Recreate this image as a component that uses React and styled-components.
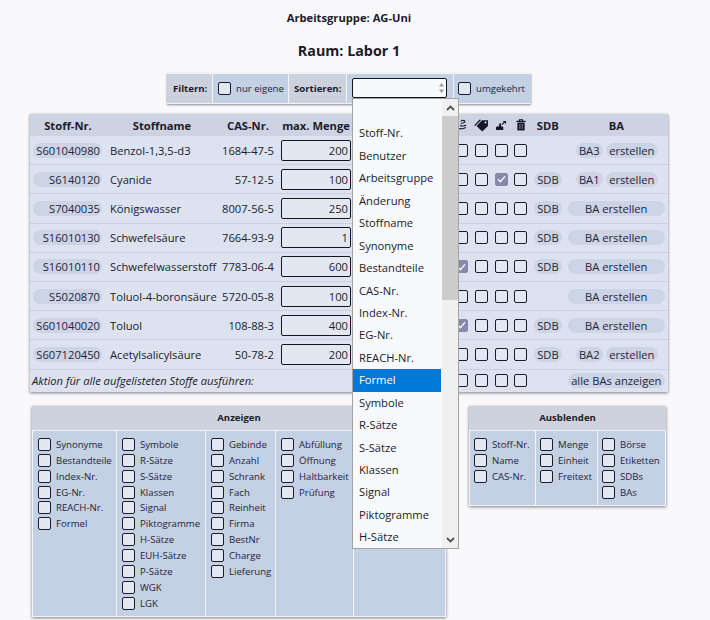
import React from 'react';
import styled, { createGlobalStyle } from 'styled-components';

const Global = createGlobalStyle`
  html, body { margin: 0; padding: 0; background: #f9f9fc; }
  body { font-family: "Open Sans", "Noto Sans", sans-serif; font-size: 11.2px; color: #1b1b2b; height: 620px; overflow: hidden; }
`;
const Page = styled.div`
  width: 698px;
  padding-top: 10px;
  display: flex;
  flex-direction: column;
`;
const Group = styled.div`
  font-weight: 700; font-size: 11.2px; line-height: 16px; text-align: center;
`;
const Room = styled.h1`
  margin: 15px 0 0; font-weight: 700; font-size: 14.3px; line-height: 20px; text-align: center;
`;
const Bar = styled.div`
  align-self: flex-start;
  margin: 12px 0 0 167px;
  display: flex; gap: 1px; height: 29px; padding: 1px 0;
  background: #f2f3f8;
  box-shadow: 0 1px 2px rgba(0,0,0,.45);
`;
const BarCell = styled.div`
  position: relative;
  display: flex; align-items: center; gap: 5px;
  width: ${p => p.$w}px; padding-left: ${p => p.$pl}px; box-sizing: border-box;
  font-size: 9.6px;
  font-weight: ${p => p.$label ? 700 : 400};
  background: ${p => p.$label ? '#ccd1de' : '#c4d0e3'};
`;
const Select = styled.div`
  width: 95px; height: 20px; box-sizing: border-box; margin-top: -1px;
  border: 1px solid #15151f; border-radius: 2px; background: #f8f9fd;
  display: flex; align-items: center; justify-content: flex-end; padding-right: 1px;
`;
const Drop = styled.div`
  position: absolute; z-index: 5; left: 5px; top: 24px;
  width: 107px; height: 451px; box-sizing: border-box;
  border: 1px solid #a3a3a3; background: #f8f9fd;
  display: flex;
`;
const DropList = styled.div`
  width: 88px; flex: none; margin-right: 1px; overflow: hidden; padding-top: 1px;
`;
const DropItem = styled.div`
  height: 22.45px; line-height: 22.45px; padding-left: 6px; font-size: 11.2px; white-space: nowrap;
  background: ${p => p.$on ? '#0078d7' : 'transparent'};
  color: ${p => p.$on ? '#fff' : '#1b1b2b'};
`;
const Track = styled.div`
  flex: 1; background: #f0f0f0; display: flex; flex-direction: column; align-items: center;
`;
const ArrowBox = styled.div`
  height: 17px; flex: none; display: flex; align-items: center; justify-content: center; align-self: stretch;
`;
const Thumb = styled.div`
  height: 184px; align-self: stretch; background: #cdcdcd; flex: none;
`;
const Spacer = styled.div`flex: 1;`;

const Table = styled.div`
  align-self: flex-start;
  margin: 10px 0 0 30px; width: 638px;
  background: #dce2ef;
  box-shadow: 0 1px 3px rgba(0,0,0,.5);
`;
const cols = '76px 112px 60px 76px 98px 19.7px 19.7px 19.7px 19.7px 34px 103px';
const HeadRow = styled.div`
  display: grid; grid-template-columns: ${cols}; height: 22px; align-items: center;
  background: #cdd3e2; font-weight: 700; text-align: center;
`;
const Row = styled.div`
  display: grid; grid-template-columns: ${cols}; height: 29.2px; align-items: center; box-sizing: border-box;
  border-bottom: 1px solid #c9d0e0;
`;
const FootRow = styled.div`
  display: grid; grid-template-columns: ${cols}; height: 22.4px; align-items: center;
`;
const Note = styled.div`
  grid-column: 1 / 6; padding-left: 2px; font-style: italic; white-space: nowrap;
`;
const Pill = styled.span`
  display: inline-block; box-sizing: border-box; height: 15px; line-height: 15px;
  border-radius: 8px; background: #cdd4e5; white-space: nowrap; color: #24243a;
  text-align: ${p => p.$right ? 'right' : 'center'};
  width: ${p => p.$w}px;
  padding-right: ${p => p.$right ? 2 : 0}px;
`;
const NrCell = styled.div`padding-left: 3px;`;
const NameCell = styled.div`padding-left: 4px; white-space: nowrap;`;
const CasCell = styled.div`padding-right: 4px; text-align: right;`;
const Amount = styled.input`
  display: block; margin-left: 3px; width: 70px; height: 21px; box-sizing: border-box;
  border: 1px solid #15151f; border-radius: 2px; background: #e3e7f2;
  font: 11.2px "Open Sans", sans-serif; color: #1b1b2b; text-align: right; padding: 0 2px 0 0;
  outline: none;
`;
const CheckCell = styled.div`display: flex; justify-content: center; align-items: center;`;
const Box = styled.span`
  display: flex; align-items: center; justify-content: center; flex: none;
  width: 13px; height: 13px; box-sizing: border-box; border-radius: 2px;
  border: 1px solid ${p => p.$on ? '#8a88a8' : '#1b1b2b'};
  background: ${p => p.$on ? '#8a88a8' : '#e3e7f2'};
`;
const SdbCell = styled.div`display: flex; padding-left: 3.2px;`;
const BaCell = styled.div`
  display: flex; gap: 3px;
  margin-left: ${p => p.$split ? 11 : 3}px;
`;

const Panels = styled.div`
  display: flex; align-items: flex-start; margin: 14px 0 0 32px; gap: 23px;
`;
const Panel = styled.section`
  width: ${p => p.$w}px;
  background: #f2f3f8;
  box-shadow: 0 1px 3px rgba(0,0,0,.5);
  padding: 0 1px 1px;
  box-sizing: border-box;
`;
const PanelTitle = styled.div`
  height: 24px; margin: 0 -1px 1px; background: #cdd2de; font-weight: 700; font-size: 9.6px; line-height: 24px; text-align: center;
`;
const PanelBody = styled.div`
  display: flex; gap: 1px; height: ${p => p.$h}px;
`;
const PanelCol = styled.div`
  box-sizing: border-box; background: #c4d0e3; padding: 5.5px 0 0 ${p => p.$pad}px;
  width: ${p => p.$w}px; flex: ${p => p.$grow ? 1 : 'none'};
`;
const Opt = styled.label`
  display: flex; align-items: center; gap: 5px; height: 15.9px; font-size: 9.6px; white-space: nowrap; color: #24243a;
`;
const LabelOpt = styled.div`
  display: flex; align-items: center; gap: 5px; color: #24243a;
`;

const Chevron = ({ up }) => (
  <svg width="9" height="6" viewBox="0 0 9 6"><path d={up ? 'M1 5L4.5 1.5L8 5' : 'M1 1L4.5 4.5L8 1'} fill="none" stroke="#555" strokeWidth="1.8" /></svg>
);
const Tick = () => (
  <svg width="9" height="8" viewBox="0 0 9 8"><path d="M1 4.2L3.4 6.6L8 1.2" fill="none" stroke="#f4f4fa" strokeWidth="1.4" /></svg>
);
const Check = ({ on }) => <Box $on={on}>{on && <Tick />}</Box>;

const dropItems = ['', 'Stoff-Nr.', 'Benutzer', 'Arbeitsgruppe', 'Änderung', 'Stoffname', 'Synonyme', 'Bestandteile', 'CAS-Nr.', 'Index-Nr.', 'EG-Nr.', 'REACH-Nr.', 'Formel', 'Symbole', 'R-Sätze', 'S-Sätze', 'Klassen', 'Signal', 'Piktogramme', 'H-Sätze'];

const rows = [
  ['S601040980', 'Benzol-1,3,5-d3', '1684-47-5', '200', [0,0,0,0], false, 'BA3'],
  ['S6140120', 'Cyanide', '57-12-5', '100', [0,0,1,0], true, 'BA1'],
  ['S7040035', 'Königswasser', '8007-56-5', '250', [0,0,0,0], true, null],
  ['S16010130', 'Schwefelsäure', '7664-93-9', '1', [0,0,0,0], true, null],
  ['S16010110', 'Schwefelwasserstoff', '7783-06-4', '600', [1,0,0,0], true, null],
  ['S5020870', 'Toluol-4-boronsäure', '5720-05-8', '100', [0,0,0,0], false, null],
  ['S601040020', 'Toluol', '108-88-3', '400', [1,0,0,0], true, null],
  ['S607120450', 'Acetylsalicylsäure', '50-78-2', '200', [0,0,0,0], true, 'BA2'],
];

const show = [
  [83, ['Synonyme', 'Bestandteile', 'Index-Nr.', 'EG-Nr.', 'REACH-Nr.', 'Formel']],
  [88, ['Symbole', 'R-Sätze', 'S-Sätze', 'Klassen', 'Signal', 'Piktogramme', 'H-Sätze', 'EUH-Sätze', 'P-Sätze', 'WGK', 'LGK']],
  [69, ['Gebinde', 'Anzahl', 'Schrank', 'Fach', 'Reinheit', 'Firma', 'BestNr', 'Charge', 'Lieferung']],
  [77, ['Abfüllung', 'Öffnung', 'Haltbarkeit', 'Prüfung']],
];
const hide = [
  [65, ['Stoff-Nr.', 'Name', 'CAS-Nr.']],
  [61, ['Menge', 'Einheit', 'Freitext']],
  [67, ['Börse', 'Etiketten', 'SDBs', 'BAs']],
];

const HeadIcon = ({ kind }) => {
  if (kind === 'hand') return (
    <svg width="12" height="12" viewBox="0 0 12 12"><path d="M1 8.5C3 10 7 10 10 8.5M4 6.5C6 7.5 9 7 10 6M5 2.5C5 1 9 1 9 2.8C9 4.5 5 3.5 5 5" fill="none" stroke="#1b1b2b" strokeWidth="1.1" /></svg>
  );
  if (kind === 'tag') return (
    <svg width="15" height="13" viewBox="0 0 15 13"><path d="M2.6 7L8 1.2H14V7L8.2 12.6Z" fill="#14142a" /><path d="M.7 6.6L6.4 .8" stroke="#14142a" strokeWidth="1.3" /><circle cx="11.6" cy="3.6" r="1" fill="#dce2ef" /></svg>
  );
  if (kind === 'fill') return (
    <svg width="12" height="11" viewBox="0 0 13 12"><path d="M1 11V8.5C1 7.5 2 7 3 7H4L5 3.5H6.5L6.5 7H7.5C8.5 7 9 7.5 9 8.5V11Z" fill="#14142a" /><path d="M7.5 5L11 1.5" stroke="#14142a" strokeWidth="1.2" /><path d="M8.5 1H12V4.5Z" fill="#14142a" /></svg>
  );
  return (
    <svg width="10" height="12" viewBox="0 0 11 13"><path d="M.5 2.5H10.5M3.8 2.2V.8H7.2V2.2" fill="none" stroke="#14142a" strokeWidth="1.2" /><path d="M1.5 3.8H9.5V12.5H1.5Z" fill="#14142a" /><path d="M3.7 5.3V11M5.5 5.3V11M7.3 5.3V11" stroke="#7c8296" strokeWidth=".8" /></svg>
  );
};

const OptionColumns = ({ data, growLast, pad }) => (
  <>
    {data.map(([w, list], i) => (
      <PanelCol key={i} $w={w} $pad={pad}>
        {list.map(t => <Opt key={t}><Box /><span>{t}</span></Opt>)}
      </PanelCol>
    ))}
    {growLast && <PanelCol $grow />}
  </>
);

export default function App() {
  return (
    <Page>
      <Global />
      <Group>Arbeitsgruppe: AG-Uni</Group>
      <Room>Raum: Labor 1</Room>
      <Bar>
        <BarCell $label $w={45} $pl={6}>Filtern:</BarCell>
        <BarCell $w={75} $pl={5}><LabelOpt><Box /><span>nur eigene</span></LabelOpt></BarCell>
        <BarCell $label $w={57} $pl={5}>Sortieren:</BarCell>
        <BarCell $w={106} $pl={5}>
          <Select>
            <svg width="7" height="12" viewBox="0 0 7 12"><path d="M3.5 1L6 4.5H1ZM3.5 11L1 7.5H6Z" fill="#9a9aa2" /></svg>
          </Select>
          <Drop>
            <DropList>
              {dropItems.map((t, i) => <DropItem key={i} $on={t === 'Formel'}>{t}</DropItem>)}
            </DropList>
            <Track>
              <ArrowBox><Chevron up /></ArrowBox>
              <Thumb />
              <Spacer />
              <ArrowBox><Chevron /></ArrowBox>
            </Track>
          </Drop>
        </BarCell>
        <BarCell $w={77} $pl={4}><LabelOpt><Box /><span>umgekehrt</span></LabelOpt></BarCell>
      </Bar>
      <Table>
        <HeadRow>
          <div>Stoff-Nr.</div><div>Stoffname</div><div>CAS-Nr.</div><div>max. Menge</div><div />
          <CheckCell><HeadIcon kind="hand" /></CheckCell>
          <CheckCell><HeadIcon kind="tag" /></CheckCell>
          <CheckCell><HeadIcon kind="fill" /></CheckCell>
          <CheckCell><HeadIcon kind="trash" /></CheckCell>
          <div>SDB</div><div>BA</div>
        </HeadRow>
        {rows.map(([nr, name, cas, amt, checks, sdb, ba]) => (
          <Row key={nr}>
            <NrCell><Pill $right $w={69}>{nr}</Pill></NrCell>
            <NameCell>{name}</NameCell>
            <CasCell>{cas}</CasCell>
            <div><Amount readOnly value={amt} /></div>
            <div />
            {checks.map((c, i) => <CheckCell key={i}><Check on={!!c} /></CheckCell>)}
            <SdbCell>{sdb && <Pill $w={28}>SDB</Pill>}</SdbCell>
            {ba ? (
              <BaCell $split><Pill $w={27}>{ba}</Pill><Pill $w={52}>erstellen</Pill></BaCell>
            ) : (
              <BaCell><Pill $w={97}>BA erstellen</Pill></BaCell>
            )}
          </Row>
        ))}
        <FootRow>
          <Note>Aktion für alle aufgelisteten Stoffe ausführen:</Note>
          {[0, 1, 2, 3].map(i => <CheckCell key={i}><Check /></CheckCell>)}
          <div />
          <BaCell><Pill $w={97}>alle BAs anzeigen</Pill></BaCell>
        </FootRow>
      </Table>
      <Panels>
        <Panel $w={414}>
          <PanelTitle>Anzeigen</PanelTitle>
          <PanelBody $h={185}><OptionColumns data={show} growLast pad={5} /></PanelBody>
        </Panel>
        <Panel $w={197}>
          <PanelTitle>Ausblenden</PanelTitle>
          <PanelBody $h={74}><OptionColumns data={hide} pad={4} /></PanelBody>
        </Panel>
      </Panels>
    </Page>
  );
}
